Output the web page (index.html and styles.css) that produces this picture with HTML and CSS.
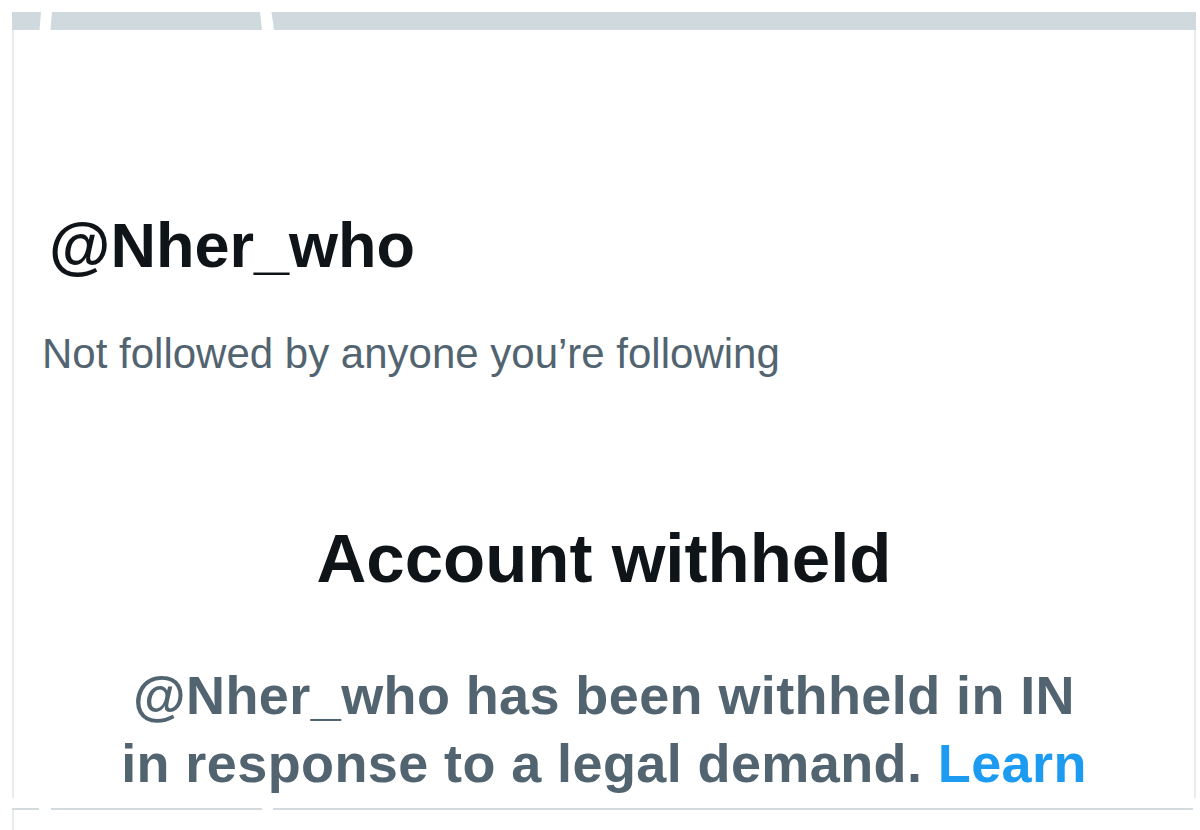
FILE: index.html
```html
<!DOCTYPE html>
<html lang="en">
<head>
<meta charset="utf-8">
<title>@Nher_who</title>
<link rel="stylesheet" href="styles.css">
</head>
<body>
<div class="page">
  <div class="topbar">
    <svg class="topbar-svg" width="1184" height="18" viewBox="0 0 1184 18">
      <polygon points="0,0 29,0 27.5,18 0,18" fill="#cfd9de"/>
      <polygon points="40,0 248,0 250,18 38.5,18" fill="#cfd9de"/>
      <polygon points="259.5,0 1184,0 1184,18 262,18" fill="#cfd9de"/>
    </svg>
  </div>
  <div class="card">
    <div class="handle">@Nher_who</div>
    <div class="note">Not followed by anyone you’re following</div>
    <h1 class="title">Account withheld</h1>
    <p class="msg">@Nher_who has been withheld in IN<br>in response to a legal demand. <a class="link" href="#">Learn</a></p>
  </div>
  <div class="divider">
    <span class="seg seg-a"></span>
    <span class="seg seg-b"></span>
    <span class="seg seg-c"></span>
  </div>
  <div class="next-card"></div>
</div>
</body>
</html>
```

FILE: styles.css
```css
html, body {
  margin: 0;
  padding: 0;
  background: #ffffff;
}

body {
  font-family: "Liberation Sans", Arial, sans-serif;
  overflow: hidden;
  height: 830px;
}

.page {
  padding: 12px 4px 0 12px;
  display: flex;
  flex-direction: column;
}

.topbar {
  height: 18px;
  display: flex;
}

.topbar-svg {
  display: block;
}

.card {
  height: 768px;
  border-left: 2px solid #e8ecee;
  border-right: 2px solid #e8ecee;
  overflow: hidden;
  display: flex;
  flex-direction: column;
  padding-left: 28px;
}

.handle {
  margin-top: 184px;
  margin-left: 7px;
  font-size: 63px;
  line-height: 63px;
  font-weight: 700;
  color: #0f1419;
}

.note {
  margin-top: 56px;
  font-size: 42px;
  line-height: 42px;
  color: #536471;
}

.title {
  margin: 149px 0 0 -28px;
  font-size: 69px;
  line-height: 69px;
  font-weight: 700;
  color: #0f1419;
  text-align: center;
}

.msg {
  width: 1040px;
  align-self: center;
  margin: 68px 0 0 -28px;
  font-size: 54px;
  line-height: 68px;
  font-weight: 700;
  color: #536471;
  text-align: center;
  letter-spacing: 0.4px;
}

.link {
  color: #1d9bf0;
  text-decoration: none;
}

.divider {
  margin-top: 10px;
  height: 2px;
  display: flex;
}

.seg {
  height: 2px;
  background: #d3dbdf;
}

.seg-a { width: 27px; }
.seg-b { width: 211px; margin-left: 12px; }
.seg-c { width: 920px; margin-left: 11px; }

.next-card {
  height: 40px;
  border-left: 2px solid #e8ecee;
}
```
